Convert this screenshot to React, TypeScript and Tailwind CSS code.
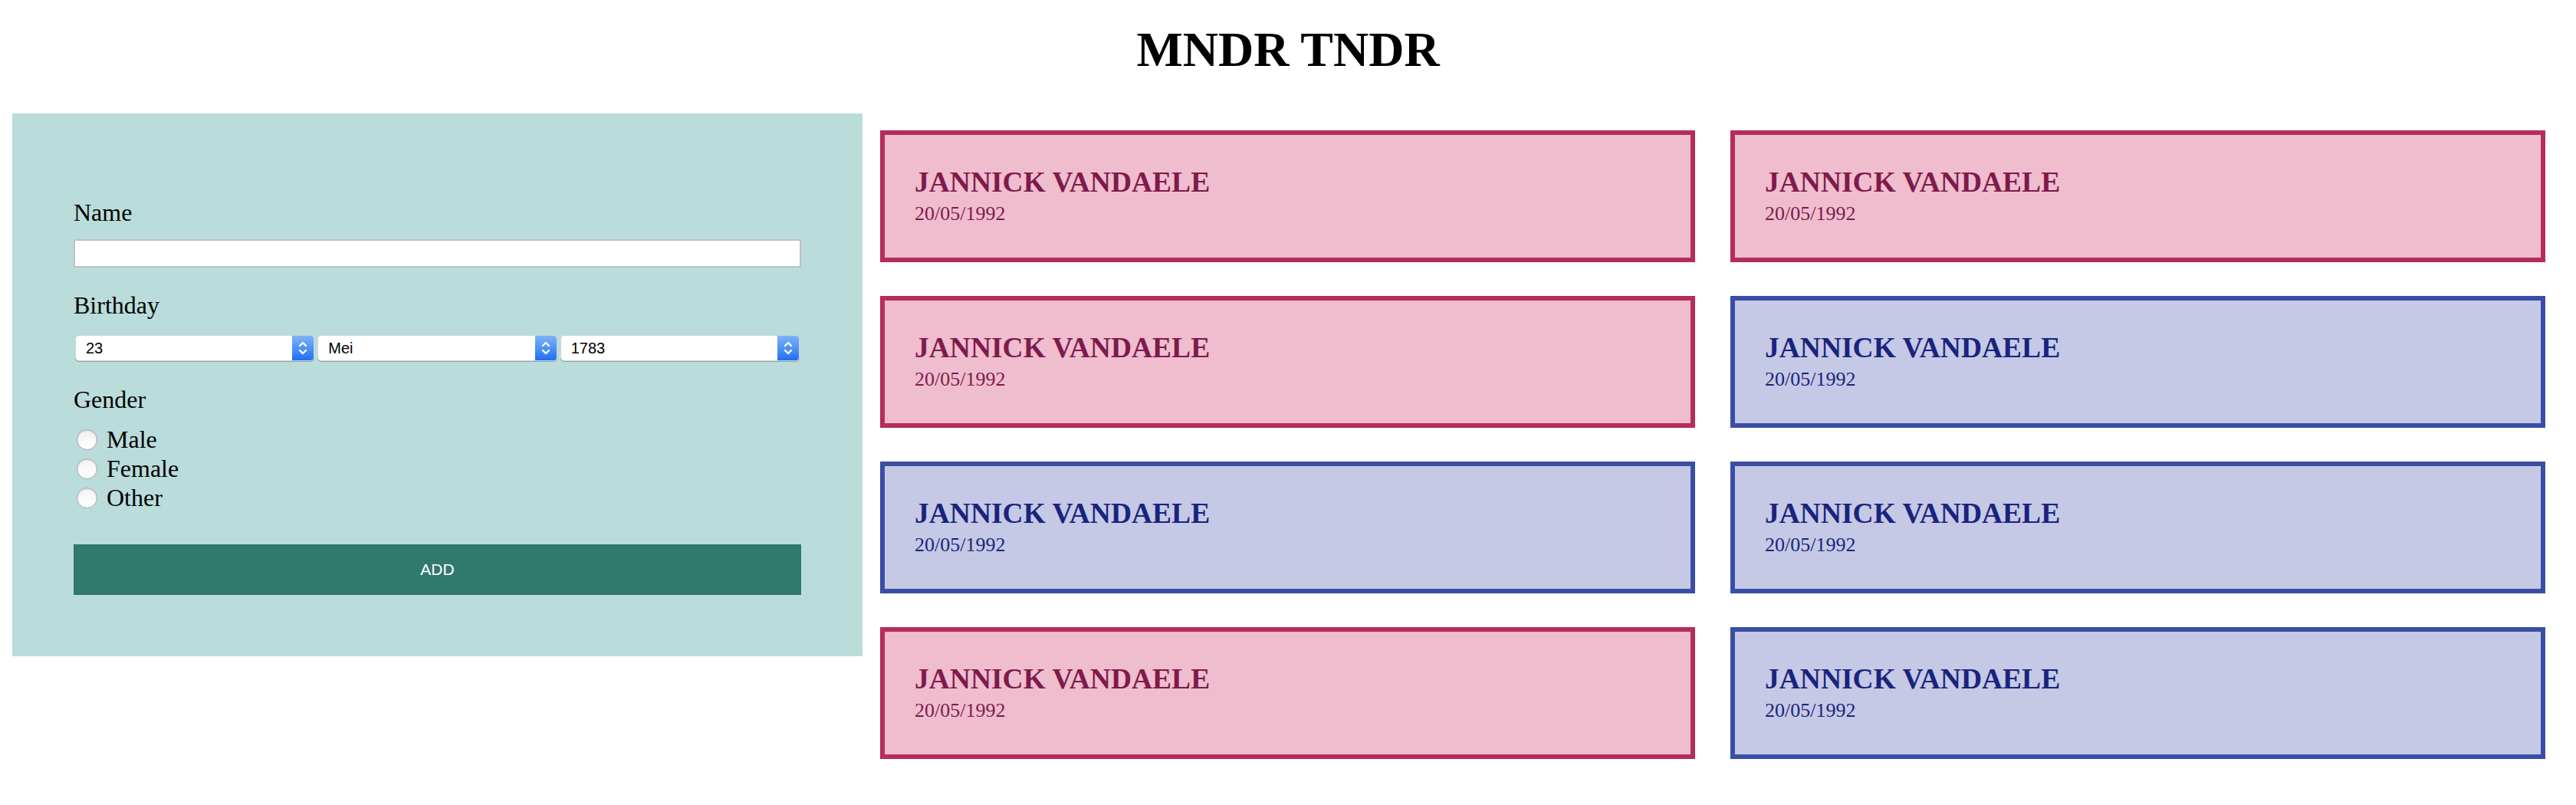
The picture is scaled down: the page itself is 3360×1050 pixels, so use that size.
import React from "react";

// Colours
const C = {
  panel: "bg-[#badcdb]",
};

type Gender = "female" | "male";

const people: { name: string; birthday: string; gender: Gender }[] = [
  { name: "JANNICK VANDAELE", birthday: "20/05/1992", gender: "female" },
  { name: "JANNICK VANDAELE", birthday: "20/05/1992", gender: "female" },
  { name: "JANNICK VANDAELE", birthday: "20/05/1992", gender: "female" },
  { name: "JANNICK VANDAELE", birthday: "20/05/1992", gender: "male" },
  { name: "JANNICK VANDAELE", birthday: "20/05/1992", gender: "male" },
  { name: "JANNICK VANDAELE", birthday: "20/05/1992", gender: "male" },
  { name: "JANNICK VANDAELE", birthday: "20/05/1992", gender: "female" },
  { name: "JANNICK VANDAELE", birthday: "20/05/1992", gender: "male" },
];

function FakeSelect({ value }: { value: string }) {
  return (
    <div className="flex h-[34px] flex-1 items-stretch overflow-hidden rounded-[5px] border border-[#c9d6d5] bg-white shadow-[0_1px_0_#8ea5a3]">
      <div
        className="flex flex-1 items-center pl-[13px] text-[20px] text-black"
        style={{ fontFamily: '"Liberation Sans", Arial, sans-serif' }}
      >
        {value}
      </div>
      <div className="flex w-[28px] items-center justify-center bg-gradient-to-b from-[#7db2f7] to-[#1f6ef5]">
        <svg width="14" height="22" viewBox="0 0 14 22" fill="none" stroke="#fff" strokeWidth="2.4" strokeLinecap="round" strokeLinejoin="round">
          <path d="M3 8l4-4 4 4" />
          <path d="M3 14l4 4 4-4" />
        </svg>
      </div>
    </div>
  );
}

function Radio({ label }: { label: string }) {
  return (
    <label className="flex h-[38px] items-center">
      <span className="ml-[4px] inline-block h-[27px] w-[27px] rounded-full border border-[#a9a9a9] bg-gradient-to-b from-[#f2f2f2] to-white shadow-[inset_0_1px_2px_rgba(0,0,0,0.15)]" />
      <span className="ml-[12px] text-[32px] leading-[38px] text-black">{label}</span>
    </label>
  );
}

function Card({ name, birthday, gender }: { name: string; birthday: string; gender: Gender }) {
  const pink = gender === "female";
  return (
    <div
      className={`flex h-[172px] flex-col justify-center border-[6px] pl-[39px] ${
        pink
          ? "border-[#b52d5a] bg-[#f0bdcf] text-[#7f1a4b]"
          : "border-[#3a4ea6] bg-[#c5c9e5] text-[#1a237e]"
      }`}
    >
      <div className="-mt-[2px] text-[37.5px] font-bold leading-[44px]">{name}</div>
      <div className="mt-[4px] text-[26px] leading-[30px]">{birthday}</div>
    </div>
  );
}

export default function App() {
  return (
    <div
      className="min-h-screen bg-white text-black"
      style={{ fontFamily: '"Liberation Serif", "Times New Roman", serif' }}
    >
      {/* Title */}
      <h1 className="pt-[28px] text-center text-[64px] font-bold leading-[74px]">MNDR TNDR</h1>

      <div className="mt-[46px] flex items-start pl-4 pr-[40px]">
        {/* Form panel */}
        <div className={`${C.panel} w-[1109px] shrink-0 px-[80px] pb-[80px] pt-[111px]`}>
          <div className="text-[32px] leading-[37px]">Name</div>
          <input
            type="text"
            className="mt-[16px] block h-[37px] w-full border-2 border-[#c0c0c0] bg-white outline-none"
          />

          <div className="mt-[31px] text-[32px] leading-[37px]">Birthday</div>
          <div className="mt-[20px] flex gap-[4px] px-[2px]">
            <FakeSelect value="23" />
            <FakeSelect value="Mei" />
            <FakeSelect value="1783" />
          </div>

          <div className="mt-[32px] text-[32px] leading-[37px]">Gender</div>
          <div className="mt-[14px] flex flex-col">
            <Radio label="Male" />
            <Radio label="Female" />
            <Radio label="Other" />
          </div>

          <button
            className="mt-[42px] flex h-[66px] w-full items-center justify-center bg-[#31786d] text-[21px] text-white"
            style={{ fontFamily: '"Liberation Sans", Arial, sans-serif' }}
          >
            ADD
          </button>
        </div>

        {/* Cards */}
        <div className="ml-[23px] mt-[22px] grid flex-1 grid-cols-2 gap-x-[46px] gap-y-[44px]">
          {people.map((p, i) => (
            <Card key={i} {...p} />
          ))}
        </div>
      </div>
    </div>
  );
}
